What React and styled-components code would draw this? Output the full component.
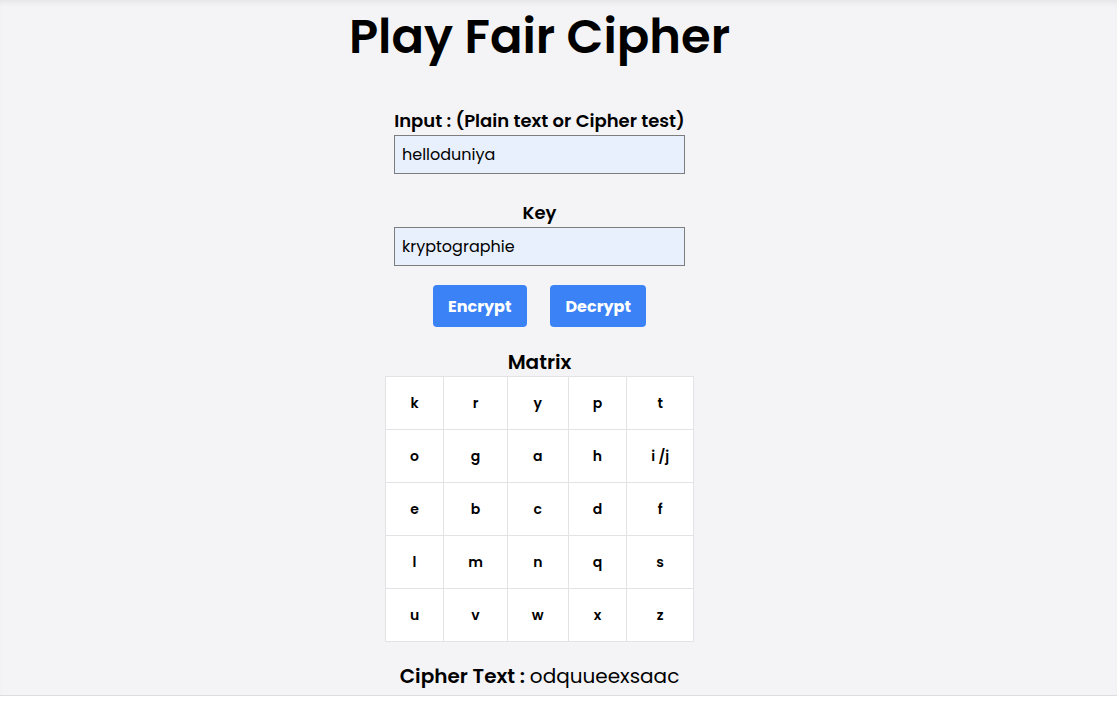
import React, { useState } from "react";
import styled, { createGlobalStyle } from "styled-components";

const GlobalStyle = createGlobalStyle`
  html, body {
    margin: 0;
    padding: 0;
    background: #ffffff;
  }
  body {
    font-family: "Poppins", "Open Sans", "Noto Sans", sans-serif;
    color: #000;
  }
`;

const Page = styled.div`
  height: 696px;
  box-sizing: border-box;
  background: #f4f4f6;
  border-bottom: 1px solid #dcdce2;
  box-shadow: inset 0 5px 6px -3px rgba(0, 0, 0, 0.07);
`;

const Column = styled.main`
  width: 1079px;
  display: flex;
  flex-direction: column;
  align-items: center;
  padding-top: 3px;
`;

const Title = styled.h1`
  margin: 0;
  font-size: 48px;
  line-height: 67px;
  font-weight: 600;
`;

const Field = styled.div`
  display: flex;
  flex-direction: column;
  align-items: center;
  margin-top: ${(p) => p.$top}px;
`;

const Label = styled.label`
  font-size: 18px;
  line-height: 28px;
  font-weight: 600;
`;

const TextInput = styled.input`
  width: 291px;
  height: 39px;
  box-sizing: border-box;
  border: 1px solid #7d7d7d;
  background: #e8f0fe;
  font-family: inherit;
  font-size: 16px;
  padding: 0 7px;
  color: #000;
  outline: none;
`;

const ButtonRow = styled.div`
  display: flex;
  gap: 23px;
  margin-top: 19px;
`;

const Button = styled.button`
  height: 42px;
  padding: 0 15.5px;
  border: none;
  border-radius: 4px;
  background: #3b82f6;
  color: #fff;
  font-family: inherit;
  font-size: 16px;
  font-weight: 700;
  cursor: pointer;
`;

const SectionTitle = styled.h3`
  margin: 21px 0 0;
  font-size: 20px;
  line-height: 28px;
  font-weight: 600;
`;

const Matrix = styled.table`
  border-collapse: collapse;
  background: #fff;
`;

const Cell = styled.td`
  border: 1px solid #e3e3e6;
  height: 53px;
  padding: 0 24px;
  text-align: center;
  font-size: 14px;
  font-weight: 600;
  box-sizing: border-box;
`;

const Result = styled.p`
  margin: 20px 0 0;
  font-size: 20px;
  line-height: 28px;
`;

const ResultLabel = styled.span`
  font-weight: 600;
`;

const matrix = [
  ["k", "r", "y", "p", "t"],
  ["o", "g", "a", "h", "i /j"],
  ["e", "b", "c", "d", "f"],
  ["l", "m", "n", "q", "s"],
  ["u", "v", "w", "x", "z"],
];

const App = () => {
  const [input, setInput] = useState("helloduniya");
  const [key, setKey] = useState("kryptographie");

  return (
    <>
      <GlobalStyle />
      <Page>
        <Column>
          <Title>Play Fair Cipher</Title>
          <Field $top={37}>
            <Label>Input : (Plain text or Cipher test)</Label>
            <TextInput value={input} onChange={(e) => setInput(e.target.value)} />
          </Field>
          <Field $top={25}>
            <Label>Key</Label>
            <TextInput value={key} onChange={(e) => setKey(e.target.value)} />
          </Field>
          <ButtonRow>
            <Button>Encrypt</Button>
            <Button>Decrypt</Button>
          </ButtonRow>
          <SectionTitle>Matrix</SectionTitle>
          <Matrix>
            <tbody>
              {matrix.map((row, i) => (
                <tr key={i}>
                  {row.map((c) => (
                    <Cell key={c}>{c}</Cell>
                  ))}
                </tr>
              ))}
            </tbody>
          </Matrix>
          <Result>
            <ResultLabel>Cipher Text : </ResultLabel>odquueexsaac
          </Result>
        </Column>
      </Page>
    </>
  );
};

export default App;
